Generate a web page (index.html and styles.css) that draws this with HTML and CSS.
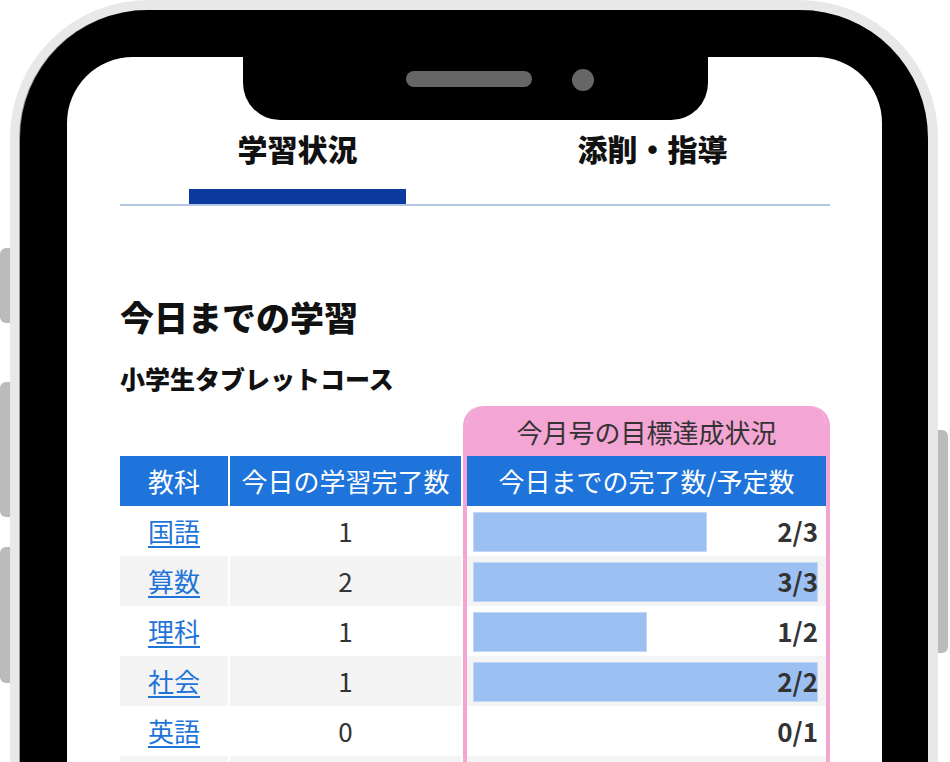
FILE: index.html
```html
<!DOCTYPE html>
<html lang="ja">
<head>
<meta charset="utf-8">
<title>学習状況</title>
<link rel="stylesheet" href="styles.css">
</head>
<body>
<div class="device">
  <span class="side-btn btn-l1"></span>
  <span class="side-btn btn-l2"></span>
  <span class="side-btn btn-l3"></span>
  <span class="side-btn btn-r1"></span>
  <div class="bezel">
    <div class="screen">
      <div class="notch"><span class="speaker"></span><span class="camera"></span></div>
      <nav class="tabs">
        <div class="tab active"><span class="tab-label">学習状況</span><span class="tab-mark"></span></div>
        <div class="tab"><span class="tab-label">添削・指導</span><span class="tab-mark"></span></div>
      </nav>
      <h1 class="title">今日までの学習</h1>
      <h2 class="course">小学生タブレットコース</h2>
      <div class="board">
        <div class="left">
          <div class="lrow head"><div class="c1">教科</div><div class="c2">今日の学習完了数</div></div>
          <div class="lrow"><div class="c1"><a href="#">国語</a></div><div class="c2">1</div></div>
          <div class="lrow alt"><div class="c1"><a href="#">算数</a></div><div class="c2">2</div></div>
          <div class="lrow"><div class="c1"><a href="#">理科</a></div><div class="c2">1</div></div>
          <div class="lrow alt"><div class="c1"><a href="#">社会</a></div><div class="c2">1</div></div>
          <div class="lrow"><div class="c1"><a href="#">英語</a></div><div class="c2">0</div></div>
          <div class="lrow alt"><div class="c1"></div><div class="c2"></div></div>
        </div>
        <div class="goal">
          <div class="goal-cap">今月号の目標達成状況</div>
          <div class="goal-head">今日までの完了数/予定数</div>
          <div class="grow"><div class="bar" style="width:67.8%"></div><b class="count">2/3</b></div>
          <div class="grow alt"><div class="bar" style="width:100%"></div><b class="count">3/3</b></div>
          <div class="grow"><div class="bar" style="width:50.4%"></div><b class="count">1/2</b></div>
          <div class="grow alt"><div class="bar" style="width:100%"></div><b class="count">2/2</b></div>
          <div class="grow"><b class="count">0/1</b></div>
          <div class="grow alt"></div>
        </div>
      </div>
    </div>
  </div>
</div>
</body>
</html>
```
FILE: styles.css
```css
html, body {
  margin: 0;
  padding: 0;
  background: #fff;
}
body {
  height: 762px;
  overflow: hidden;
  font-family: "Noto Sans CJK JP", "Noto Sans", sans-serif;
  color: #333;
}
.device {
  position: relative;
  margin-left: 10px;
  width: 908px;
  height: 900px;
  padding: 10px 10px 0 10px;
  background: #e8e8e8;
  border-radius: 138px 138px 0 0;
}
.side-btn {
  position: absolute;
  width: 10px;
  background: #bbbbbb;
}
.btn-l1 { left: -10px; top: 248px; height: 75px; border-radius: 6px 0 0 6px; }
.btn-l2 { left: -10px; top: 382px; height: 135px; border-radius: 6px 0 0 6px; }
.btn-l3 { left: -10px; top: 547px; height: 136px; border-radius: 6px 0 0 6px; }
.btn-r1 { right: -10px; top: 430px; height: 223px; border-radius: 0 6px 6px 0; }
.bezel {
  height: 100%;
  box-sizing: border-box;
  padding: 47px 46px 0 47px;
  background: #000;
  border-radius: 128px 128px 0 0;
  box-shadow: -1px 0 0 #9a9a9a;
}
.screen {
  position: relative;
  height: 100%;
  box-sizing: border-box;
  padding: 0 52px 0 53px;
  background: #fff;
  border-radius: 66px 66px 0 0;
}
.notch {
  position: absolute;
  top: 0;
  left: 176px;
  width: 465px;
  height: 63px;
  box-sizing: border-box;
  padding-left: 163px;
  display: flex;
  align-items: flex-start;
  gap: 40px;
  background: #000;
  border-radius: 0 0 37px 37px;
}
.speaker {
  margin-top: 14px;
  width: 126px;
  height: 16px;
  border-radius: 8px;
  background: #666;
}
.camera {
  margin-top: 12px;
  width: 22px;
  height: 22px;
  border-radius: 50%;
  background: #666;
}
.tabs {
  display: flex;
  border-bottom: 2px solid #b3c7e2;
}
.tab {
  flex: 1;
  display: flex;
  flex-direction: column;
  align-items: center;
  padding-top: 71px;
}
.tab-label {
  font-size: 30px;
  line-height: 40px;
  font-weight: 900;
  color: #111;
}
.tab-mark {
  margin-top: 21px;
  width: 217px;
  height: 15px;
}
.tab.active .tab-mark {
  background: #0b3a9f;
}
.title {
  margin: 89px 0 0;
  font-size: 34px;
  line-height: 44px;
  font-weight: 900;
  color: #111;
}
.course {
  margin: 23px 0 0;
  font-size: 25px;
  line-height: 32px;
  font-weight: 900;
  color: #111;
}
.board {
  margin-top: 12px;
  display: flex;
  gap: 2px;
  align-items: flex-start;
}
.left {
  margin-top: 50px;
  display: flex;
  flex-direction: column;
}
.lrow {
  display: flex;
  gap: 2px;
  height: 50px;
  font-size: 26px;
  line-height: 50px;
  text-align: center;
}
.lrow .c1 { width: 108px; }
.lrow .c2 { width: 231px; }
.lrow.alt .c1, .lrow.alt .c2 { background: #f4f4f4; }
.lrow.head .c1, .lrow.head .c2 {
  background: #1e74da;
  color: #fff;
}
.lrow a {
  color: #1f74d8;
  text-decoration: underline;
  text-underline-offset: 4px;
  text-decoration-thickness: 2px;
}
.goal {
  width: 359px;
  border: 4px solid #f3a5d3;
  border-bottom: none;
  border-top: none;
  border-radius: 20px 20px 0 0;
  background: #fff;
  overflow: hidden;
}
.goal-cap {
  height: 50px;
  line-height: 52px;
  text-align: center;
  background: #f3a5d3;
  font-size: 26px;
  color: #333;
}
.goal-head {
  height: 50px;
  line-height: 50px;
  text-align: center;
  background: #1e74da;
  color: #fff;
  font-size: 26px;
}
.grow {
  height: 50px;
  display: grid;
  grid-template-columns: 1fr;
  grid-template-rows: 50px;
  padding: 0 8px 0 6px;
}
.grow.alt { background: #f4f4f4; }
.bar {
  grid-area: 1 / 1;
  align-self: start;
  margin-top: 6px;
  height: 40px;
  box-sizing: border-box;
  background: #9cc0f2;
  border: 1px solid #c0d7f6;
}
.count {
  grid-area: 1 / 1;
  justify-self: end;
  align-self: center;
  font-size: 26px;
  line-height: 1;
  font-weight: 700;
  color: #333;
}
```
